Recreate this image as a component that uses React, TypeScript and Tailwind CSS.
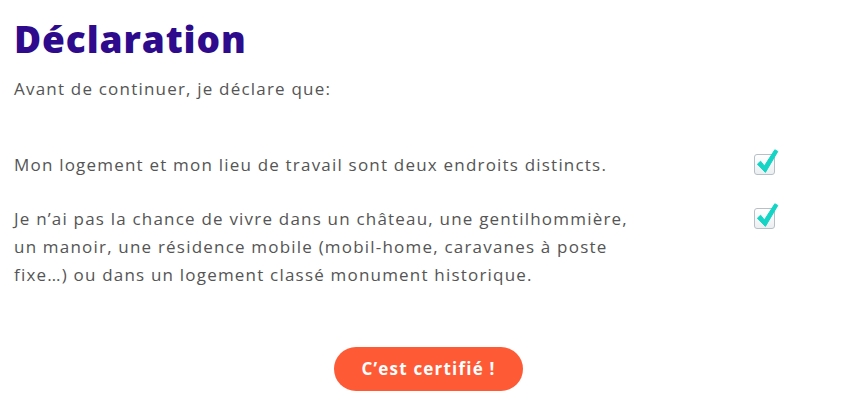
import React from "react";

const items = [
  "Mon logement et mon lieu de travail sont deux endroits distincts.",
  "Je n\u2019ai pas la chance de vivre dans un château, une gentilhommière, un manoir, une résidence mobile (mobil-home, caravanes à poste fixe\u2026) ou dans un logement classé monument historique.",
];

function CheckBox() {
  return (
    <span className="relative block h-[21px] w-[21px] rounded-[3px] border border-[#b7c0c8] bg-gradient-to-b from-white to-[#eceff1]">
      <svg
        className="absolute -left-px -top-[7px]"
        width="26"
        height="30"
        viewBox="0 0 26 30"
      >
        <path
          d="M3.4 16.2 L6.6 13.2 L10.4 18 L20.8 1.8 L23.8 3.4 L11.4 24.4 Z"
          fill="#14d5c5"
          stroke="#14d5c5"
          strokeWidth="1"
          strokeLinejoin="round"
        />
      </svg>
    </span>
  );
}

export default function App() {
  return (
    <div className="h-[419px] w-[848px] bg-white px-[14px] pt-[15px] font-['Open_Sans',sans-serif] text-[#555555]">
      <h1 className="text-[37px] font-extrabold leading-[48px] tracking-[0.9px] text-[#2e0a8c]">
        Déclaration
      </h1>
      <p className="mt-[12px] text-[17px] leading-[28px] tracking-[1.2px]">
        Avant de continuer, je déclare que:
      </p>

      <ul className="mt-[48px] flex flex-col gap-[26px]">
        {items.map((text) => (
          <li key={text} className="grid grid-cols-[740px_22px] items-start">
            <span className="w-[640px] text-[17px] leading-[28px] tracking-[1.2px]">
              {text}
            </span>
            <span className="pt-[3px]">
              <CheckBox />
            </span>
          </li>
        ))}
      </ul>

      <div className="mt-[58px] flex justify-center pl-[9px]">
        <button className="h-[44px] w-[189px] rounded-full bg-[#ff5a36] text-[17px] font-bold tracking-[1.2px] text-white">
          C’est certifié !
        </button>
      </div>
    </div>
  );
}
